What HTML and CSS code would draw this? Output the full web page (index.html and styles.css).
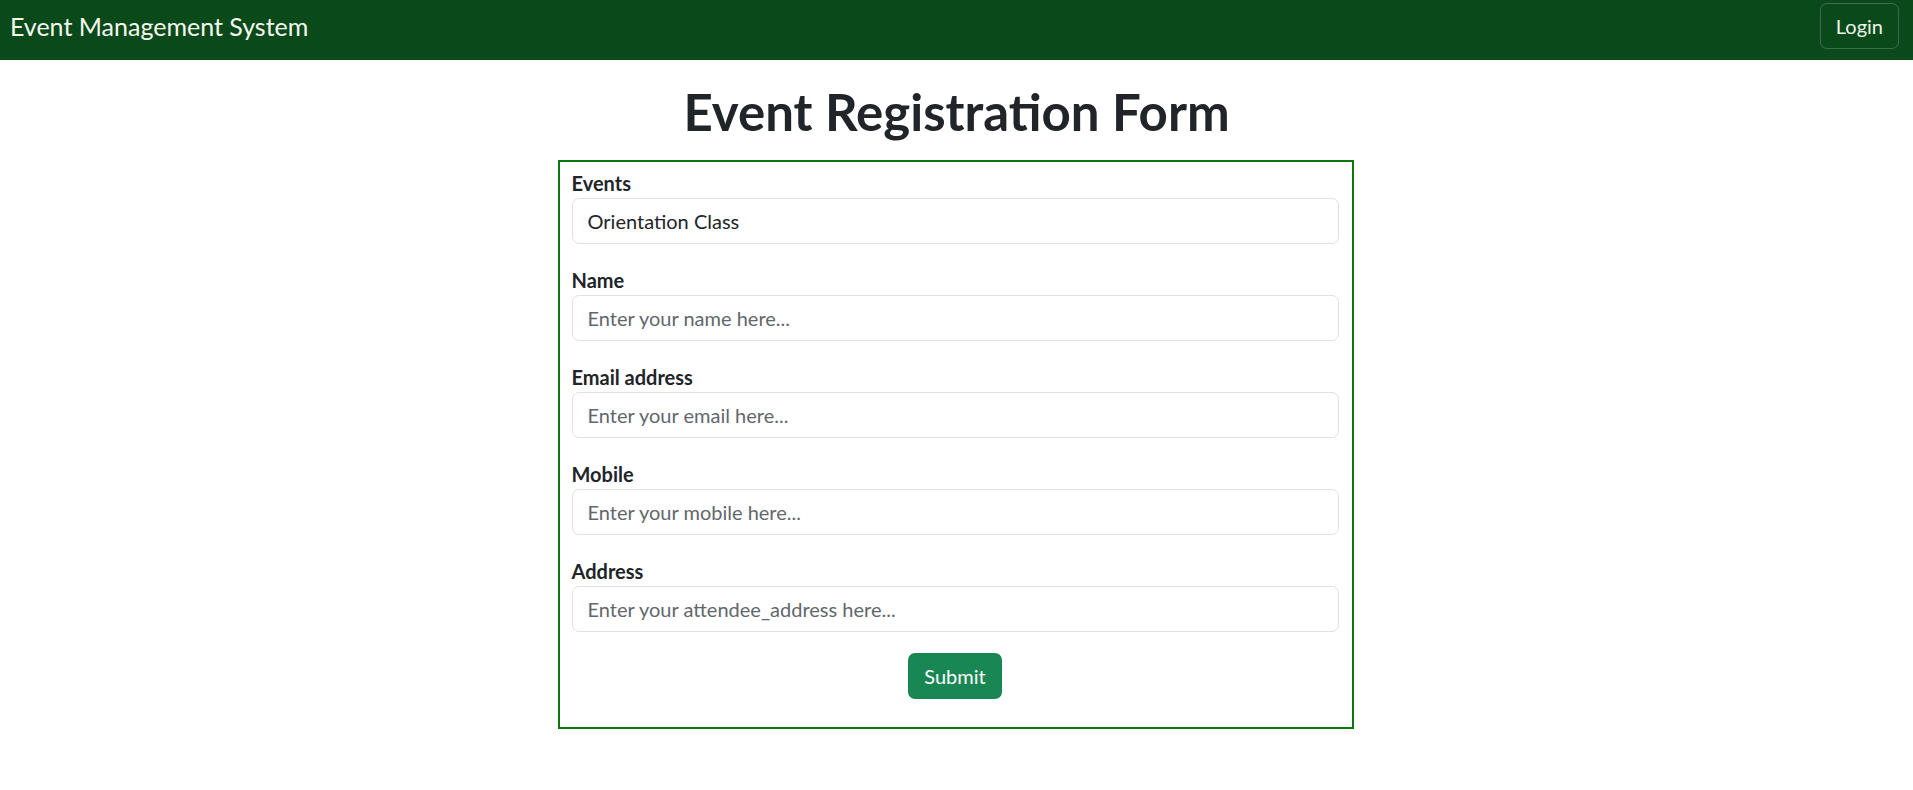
FILE: index.html
```html
<!DOCTYPE html>
<html lang="en">
<head>
<meta charset="utf-8">
<title>Event Registration Form</title>
<link rel="stylesheet" href="styles.css">
</head>
<body>
<nav class="navbar">
  <a class="brand" href="#">Event Management System</a>
  <button class="login" type="button">Login</button>
</nav>
<main class="page">
  <h1 class="title">Event Registration Form</h1>
  <form class="reg-form">
    <div class="group">
      <label class="label" for="event">Events</label>
      <input class="field" id="event" type="text" value="Orientation Class" readonly>
    </div>
    <div class="group">
      <label class="label" for="name">Name</label>
      <input class="field" id="name" type="text" placeholder="Enter your name here...">
    </div>
    <div class="group">
      <label class="label" for="email">Email address</label>
      <input class="field" id="email" type="email" placeholder="Enter your email here...">
    </div>
    <div class="group">
      <label class="label" for="mobile">Mobile</label>
      <input class="field" id="mobile" type="text" placeholder="Enter your mobile here...">
    </div>
    <div class="group">
      <label class="label" for="address">Address</label>
      <input class="field" id="address" type="text" placeholder="Enter your attendee_address here...">
    </div>
    <div class="actions">
      <button class="submit" type="submit">Submit</button>
    </div>
  </form>
</main>
</body>
</html>
```
FILE: styles.css
```css
* {
  box-sizing: border-box;
}

body {
  margin: 0;
  font-family: Lato, "Noto Sans", sans-serif;
  color: #212529;
  background: #ffffff;
}

.navbar {
  display: flex;
  justify-content: space-between;
  align-items: flex-start;
  height: 60px;
  padding: 3px 14px 0 10px;
  background: #0a4a1a;
}

.brand {
  font-size: 25px;
  line-height: 46px;
  color: #f6f8ef;
  text-decoration: none;
}

.login {
  height: 46px;
  padding: 0 15px;
  font-family: inherit;
  font-size: 20px;
  line-height: 44px;
  color: #eef5e8;
  background: transparent;
  border: 1px solid rgba(255, 255, 255, 0.2);
  border-radius: 7px;
}

.page {
  display: flex;
  flex-direction: column;
  align-items: center;
}

.title {
  margin: 21px 0 18px;
  font-size: 51px;
  font-weight: 700;
  line-height: 1.2;
  color: #212529;
}

.reg-form {
  width: 796px;
  margin-right: 2px;
  padding: 6px 13px 28px 12px;
  border: 2px solid #0c780c;
}

.group {
  margin-bottom: 21px;
}

.label {
  display: block;
  font-size: 20px;
  font-weight: 700;
  line-height: 30px;
  color: #212529;
}

.field {
  display: block;
  width: 100%;
  height: 46px;
  padding: 0 15px;
  font-family: inherit;
  font-size: 20px;
  color: #212529;
  background: #ffffff;
  border: 1px solid #dee2e6;
  border-radius: 7px;
  outline: none;
}

.field::placeholder {
  color: #62676c;
  opacity: 1;
}

.actions {
  display: flex;
  justify-content: center;
}

.submit {
  height: 46px;
  padding: 0 16px;
  font-family: inherit;
  font-size: 20px;
  color: #ffffff;
  background: #198754;
  border: none;
  border-radius: 7px;
}
```
